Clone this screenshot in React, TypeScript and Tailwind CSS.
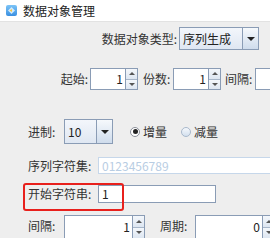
import React from 'react';

const font = { fontFamily: '"Noto Sans CJK SC", "Noto Sans", sans-serif' };

const Arrow: React.FC<{ up?: boolean; size?: number }> = ({ up, size = 5 }) => (
  <svg width={size * 2} height={size} viewBox="0 0 10 5">
    <path d={up ? 'M0 5 L5 0 L10 5 Z' : 'M0 0 L10 0 L5 5 Z'} fill="#222" />
  </svg>
);

const Spinner: React.FC<{ value: string; fieldW: string; h: string }> = ({ value, fieldW, h }) => (
  <div className={`flex shrink-0 ${h}`}>
    <div className={`${fieldW} shrink-0 h-full bg-white border border-[#8a9cb5] flex items-center justify-end pr-[2px] text-[12px] text-[#222]`}>
      {value}
    </div>
    <div className="w-[12px] shrink-0 h-full flex flex-col border border-l-0 border-[#8a9cb5]">
      <div className="flex-1 flex items-center justify-center bg-gradient-to-b from-[#f4f7fb] to-[#dde6f1] border-b border-[#a7b6c9]">
        <svg width="6" height="3" viewBox="0 0 6 3"><path d="M0 3 L3 0 L6 3 Z" fill="#555" /></svg>
      </div>
      <div className="flex-1 flex items-center justify-center bg-gradient-to-b from-[#f4f7fb] to-[#dde6f1]">
        <svg width="6" height="3" viewBox="0 0 6 3"><path d="M0 0 L6 0 L3 3 Z" fill="#555" /></svg>
      </div>
    </div>
  </div>
);

const Combo: React.FC<{ value: string; w: string; h: string; btn: string }> = ({ value, w, h, btn }) => (
  <div className={`flex shrink-0 ${w} ${h} border border-[#8a9cb5] bg-gradient-to-b from-[#f3f6fb] to-[#dfe7f2]`}>
    <div className="flex-1 flex items-center pl-[3px] text-[12px] text-[#222]">{value}</div>
    <div className={`${btn} h-full border-l border-[#8a9cb5] flex items-center justify-center bg-gradient-to-b from-[#f6f9fc] to-[#cfdcec]`}>
      <Arrow size={4} />
    </div>
  </div>
);

export default function App() {
  return (
    <div className="w-[270px] h-[238px] overflow-hidden bg-[#eeeeee] text-[12px] text-[#333] whitespace-nowrap" style={font}>
      {/* title bar */}
      <div className="h-[22px] bg-white border-b border-[#e2e2e2] flex items-center pl-[6px]">
        <svg width="11" height="11" viewBox="0 0 11 11">
          <defs>
            <linearGradient id="ig" x1="0" y1="0" x2="0" y2="1">
              <stop offset="0" stopColor="#7cc4f7" />
              <stop offset="1" stopColor="#3a8fe0" />
            </linearGradient>
          </defs>
          <rect x="0" y="0" width="11" height="11" rx="2" fill="url(#ig)" />
          <path d="M5.5 2 L9 5.5 L5.5 9 L2 5.5 Z" fill="#cfeaff" />
          <path d="M3.5 5.5 L6 4 L6 7 Z" fill="#f5c542" />
        </svg>
        <span className="ml-[6px] text-[12px] text-[#222]">数据对象管理</span>
      </div>

      {/* type */}
      <div className="mt-[5px] h-[23px] flex items-center justify-end pr-[11px]">
        <span className="mr-[2px]">数据对象类型:</span>
        <Combo value="序列生成" w="w-[80px]" h="h-[23px]" btn="w-[16px]" />
      </div>

      {/* start / count / interval */}
      <div className="mt-[18px] h-[22px] flex items-center">
        <span className="w-[88px] shrink-0 text-right">起始:</span>
        <div className="ml-[2px] shrink-0"><Spinner value="1" fieldW="w-[36px]" h="h-[22px]" /></div>
        <span className="ml-[5px] w-[30px] shrink-0">份数:</span>
        <Spinner value="1" fieldW="w-[36px]" h="h-[22px]" />
        <span className="ml-[4px] w-[30px] shrink-0">间隔:</span>
        <div className="w-[40px] shrink-0 h-[22px] bg-white border border-[#8a9cb5]" />
      </div>

      {/* radix */}
      <div className="mt-[29px] h-[25px] flex items-center pl-[28px]">
        <span className="w-[36px] shrink-0">进制:</span>
        <Combo value="10" w="w-[49px]" h="h-[25px]" btn="w-[16px]" />
        <div className="ml-[17px] shrink-0 w-[10px] h-[10px] rounded-full border border-[#8a8f99] bg-white flex items-center justify-center">
          <div className="w-[5px] h-[5px] rounded-full bg-[#222]" />
        </div>
        <span className="ml-[3px]">增量</span>
        <div className="ml-[14px] shrink-0 w-[10px] h-[10px] rounded-full border border-[#a9b9cc] bg-gradient-to-b from-[#f5f8fc] to-[#d3e0ee]" />
        <span className="ml-[3px]">减量</span>
      </div>

      {/* charset */}
      <div className="mt-[13px] h-[17px] flex items-center pl-[28px]">
        <span className="w-[70px] shrink-0">序列字符集:</span>
        <div className="w-[190px] shrink-0 h-[17px] bg-white border border-[#c6d7ea] flex items-center pl-[3px] text-[#b8cde3]">
          0123456789
        </div>
      </div>

      {/* start string */}
      <div className="relative mt-[11px] h-[18px] flex items-center pl-[28px]">
        <span className="w-[70px] shrink-0">开始字符串:</span>
        <div className="w-[118px] shrink-0 h-[18px] bg-white border border-[#8a9cb5] flex items-center pl-[3px] text-[#222]">1</div>
        <div className="absolute left-[23px] top-[-2px] w-[101px] h-[28px] border-2 border-[#e8201c] rounded-[3px]" />
      </div>

      {/* interval / period */}
      <div className="mt-[12px] h-[24px] flex items-start pl-[28px]">
        <span className="w-[36px] shrink-0 mt-[2px]">间隔:</span>
        <Spinner value="1" fieldW="w-[69px]" h="h-[24px]" />
        <span className="ml-[15px] w-[35px] shrink-0 mt-[2px]">周期:</span>
        <Spinner value="0" fieldW="w-[68px]" h="h-[24px]" />
      </div>
    </div>
  );
}
